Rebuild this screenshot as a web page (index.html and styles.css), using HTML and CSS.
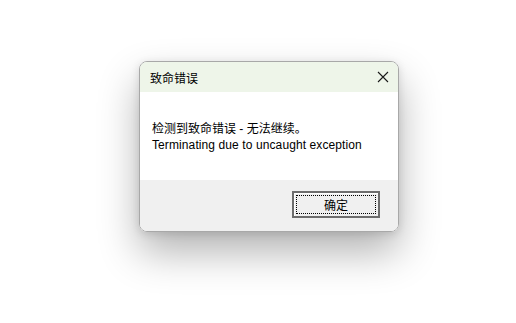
FILE: index.html
```html
<!DOCTYPE html>
<html lang="zh-CN">
<head>
    <meta charset="UTF-8">
    <title>致命错误</title>
    <link rel="stylesheet" href="styles.css">
</head>
<body>
    <div class="dialog">
        <div class="title-bar">
            <span class="title">致命错误</span>
            <svg class="close" width="12" height="12" viewBox="0 0 12 12">
                <path d="M1 1 L11 11 M11 1 L1 11" stroke="#1a1a1a" stroke-width="1.1" fill="none"/>
            </svg>
        </div>
        <div class="content">
            <p>检测到致命错误 - 无法继续。</p>
            <p class="en">Terminating due to uncaught exception</p>
        </div>
        <div class="footer">
            <button class="ok-btn"><span class="focus">确定</span></button>
        </div>
    </div>
</body>
</html>
```

FILE: styles.css
```css
* {
    margin: 0;
    padding: 0;
    box-sizing: border-box;
}

body {
    background: #ffffff;
    font-family: "Liberation Sans", "Noto Sans CJK SC", sans-serif;
    font-size: 12px;
    color: #000;
    padding: 61px 0 0 139px;
    height: 323px;
    overflow: hidden;
}

/* Dialog window */
.dialog {
    width: 260px;
    height: 171px;
    border: 1px solid #a8a8a8;
    border-radius: 8px;
    overflow: hidden;
    display: flex;
    flex-direction: column;
    box-shadow: 0 20px 40px rgba(0, 0, 0, 0.3), 0 2px 8px rgba(0, 0, 0, 0.12);
}

.title-bar {
    height: 30px;
    background: #eef5e9;
    display: flex;
    align-items: center;
    justify-content: space-between;
    padding: 0 9px 0 10px;
}

.title {
    font-size: 12px;
}

.close {
    display: block;
}

.content {
    height: 88px;
    background: #ffffff;
    padding: 29px 0 0 12px;
    line-height: 16px;
}

.en {
    letter-spacing: 0.1px;
}

.footer {
    flex: 1;
    background: #f0f0f0;
    display: flex;
    justify-content: flex-end;
    padding: 11px 18px 0 0;
}

/* Classic push button */
.ok-btn {
    width: 88px;
    height: 27px;
    background: #f0f0f0;
    border: 2px solid #6d6d6d;
    box-shadow: inset 1px 1px #ffffff;
    padding: 2px;
    font-family: inherit;
    font-size: 12px;
    color: #000;
}

.focus {
    display: flex;
    align-items: center;
    justify-content: center;
    height: 100%;
    border: 1px dotted #000;
}
```
